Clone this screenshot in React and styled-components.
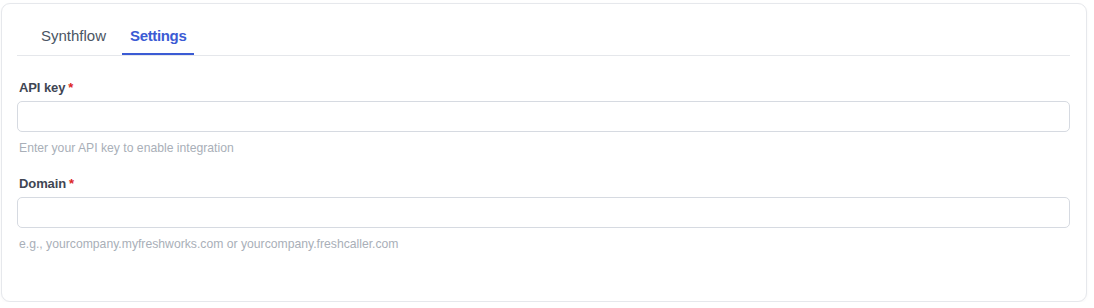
import styled, { createGlobalStyle } from "styled-components";

const GlobalStyle = createGlobalStyle`
  body {
    margin: 0;
    background: #ffffff;
    font-family: "Liberation Sans", Arial, sans-serif;
  }
`;

const App = () => {
  return (
    <>
      <GlobalStyle />
      <Card>
        <TabList>
          <Tab>Synthflow</Tab>
          <Tab active>Settings</Tab>
        </TabList>
        <Form>
          <Field>
            <Label>
              API key<Required>*</Required>
            </Label>
            <Input type="text" />
            <Hint>Enter your API key to enable integration</Hint>
          </Field>
          <Field>
            <Label>
              Domain<Required>*</Required>
            </Label>
            <Input type="text" />
            <Hint>e.g., yourcompany.myfreshworks.com or yourcompany.freshcaller.com</Hint>
          </Field>
        </Form>
      </Card>
    </>
  );
};

export default App;

const Card = styled.div`
  box-sizing: border-box;
  width: 1086px;
  height: 299px;
  margin: 3px 0 0 1px;
  padding: 13px 16px 0 15px;
  background: #ffffff;
  border: 1px solid #e6e8ec;
  border-radius: 9px;
  box-shadow: 0 1px 3px rgba(16, 24, 40, 0.04);
`;

const TabList = styled.div`
  display: flex;
  gap: 8px;
  padding-left: 16px;
  border-bottom: 1px solid #e5e7eb;
`;

const Tab = styled.button`
  border: none;
  background: none;
  padding: 9px 8px 7px;
  border-bottom: 2px solid ${(p) => (p.active ? "#3b5bd4" : "transparent")};
  font-family: "Liberation Sans", Arial, sans-serif;
  font-size: 15px;
  line-height: 20px;
  font-weight: ${(p) => (p.active ? 600 : 400)};
  letter-spacing: ${(p) => (p.active ? "-0.35px" : "0")};
  color: ${(p) => (p.active ? "#3b5bd4" : "#4b5563")};
  cursor: pointer;
`;

const Form = styled.div`
  display: flex;
  flex-direction: column;
  gap: 18px;
  padding-top: 23px;
`;

const Field = styled.div`
  display: flex;
  flex-direction: column;
`;

const Label = styled.label`
  font-size: 13px;
  line-height: 18px;
  font-weight: 700;
  letter-spacing: -0.1px;
  color: #3f4653;
  padding-left: 2px;
  margin-bottom: 4px;
`;

const Required = styled.span`
  color: #dc2626;
  margin-left: 3px;
`;

const Input = styled.input`
  box-sizing: border-box;
  height: 31px;
  width: 100%;
  border: 1px solid #d6dae1;
  border-radius: 5px;
  padding: 0 10px;
  font-size: 13px;
  outline: none;
`;

const Hint = styled.p`
  margin: 7px 0 0;
  padding-left: 2px;
  font-size: 12.2px;
  line-height: 18px;
  color: #a9afb8;
`;
